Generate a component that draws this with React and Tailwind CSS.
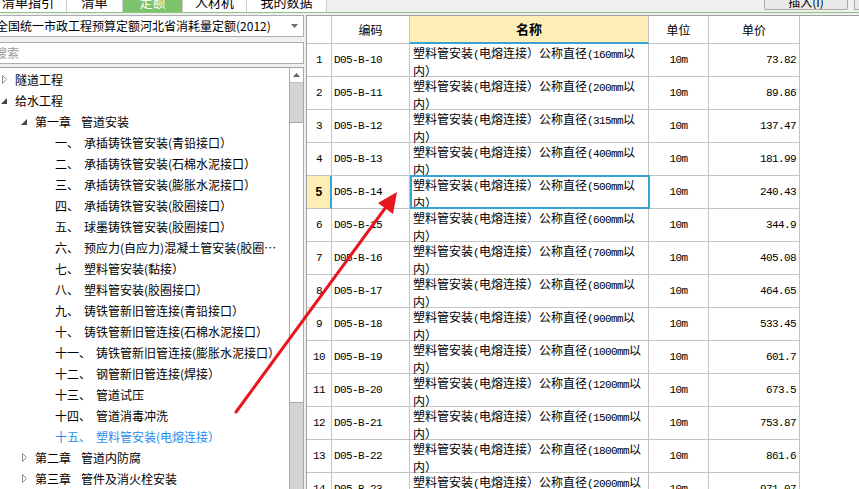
import React from 'react'

const mono = "font-['Liberation_Mono','Noto_Sans_CJK_SC',monospace] text-[11px] tracking-[-0.6px]"

const tabs = [
  { name: '清单指引', w: 'w-[67px]', align: 'pl-[2px]' },
  { name: '清单', w: 'w-[56px]', align: 'text-center' },
  { name: '定额', w: 'w-[60px]', align: 'text-center', active: true },
  { name: '人材机', w: 'w-[64px]', align: 'text-center' },
  { name: '我的数据', w: 'w-[80px]', align: 'text-center' },
]

const tree = [
  { lv: 0, icon: 'closed', text: '隧道工程' },
  { lv: 0, icon: 'open', text: '给水工程' },
  { lv: 1, icon: 'open', num: '第一章', text: '管道安装' },
  { lv: 2, num: '一、', text: '承插铸铁管安装(青铅接口）' },
  { lv: 2, num: '二、', text: '承插铸铁管安装(石棉水泥接口）' },
  { lv: 2, num: '三、', text: '承插铸铁管安装(膨胀水泥接口）' },
  { lv: 2, num: '四、', text: '承插铸铁管安装(胶圈接口）' },
  { lv: 2, num: '五、', text: '球墨铸铁管安装(胶圈接口）' },
  { lv: 2, num: '六、', text: '预应力(自应力)混凝土管安装(胶圈…' },
  { lv: 2, num: '七、', text: '塑料管安装(黏接）' },
  { lv: 2, num: '八、', text: '塑料管安装(胶圈接口）' },
  { lv: 2, num: '九、', text: '铸铁管新旧管连接(青铅接口）' },
  { lv: 2, num: '十、', text: '铸铁管新旧管连接(石棉水泥接口）' },
  { lv: 2, num: '十一、', text: '铸铁管新旧管连接(膨胀水泥接口）' },
  { lv: 2, num: '十二、', text: '钢管新旧管连接(焊接）' },
  { lv: 2, num: '十三、', text: '管道试压' },
  { lv: 2, num: '十四、', text: '管道消毒冲洗' },
  { lv: 2, num: '十五、', text: '塑料管安装(电熔连接）', active: true },
  { lv: 1, icon: 'closed', num: '第二章', text: '管道内防腐' },
  { lv: 1, icon: 'closed', num: '第三章', text: '管件及消火栓安装' },
]

const rows = [
  [1, 'D05-B-10', '160', '73.82'],
  [2, 'D05-B-11', '200', '89.86'],
  [3, 'D05-B-12', '315', '137.47'],
  [4, 'D05-B-13', '400', '181.99'],
  [5, 'D05-B-14', '500', '240.43'],
  [6, 'D05-B-15', '600', '344.9'],
  [7, 'D05-B-16', '700', '405.08'],
  [8, 'D05-B-17', '800', '464.65'],
  [9, 'D05-B-18', '900', '533.45'],
  [10, 'D05-B-19', '1000', '601.7'],
  [11, 'D05-B-20', '1200', '673.5'],
  [12, 'D05-B-21', '1500', '753.87'],
  [13, 'D05-B-22', '1800', '861.6'],
  [14, 'D05-B-23', '2000', '971.07'],
]

function Arrow({ icon }) {
  if (icon === 'open') {
    return (
      <svg width="7" height="6" viewBox="0 0 7 6" className="shrink-0">
        <path d="M6 0 L6 6 L0 6 Z" fill="#454545" />
      </svg>
    )
  }
  return (
    <svg width="7" height="9" viewBox="0 0 7 9" className="shrink-0">
      <path d="M1.5 0.5 L5.5 4.5 L1.5 8.5 Z" fill="white" stroke="#8c8c8c" />
    </svg>
  )
}

function TreeRow({ item }) {
  if (item.lv === 2) {
    return (
      <div className={`flex h-[21px] items-center gap-[5px] whitespace-nowrap pl-[55px] ${item.active ? 'text-[#1f8ef0]' : ''}`}>
        <span>{item.num}</span>
        <span>{item.text}</span>
      </div>
    )
  }
  if (item.lv === 1) {
    return (
      <div className="flex h-[21px] items-center whitespace-nowrap pl-[21px]">
        <Arrow icon={item.icon} />
        <span className="ml-[7px]">{item.num}</span>
        <span className="ml-[10px]">{item.text}</span>
      </div>
    )
  }
  return (
    <div className="flex h-[21px] items-center whitespace-nowrap pl-[1px]">
      <Arrow icon={item.icon} />
      <span className="ml-[7px]">{item.text}</span>
    </div>
  )
}

export default function App() {
  return (
    <div className="relative h-[489px] w-[859px] overflow-hidden bg-[#f0f0f0] font-['Noto_Sans_CJK_SC',sans-serif] text-[12px] text-black">
      {/* tab strip, mostly scrolled out of view */}
      <div className="flex h-[13px] border-b border-[#86c779]">
        <div className="flex h-[12px] bg-white">
          {tabs.map((t) => (
            <div
              key={t.name}
              className={`${t.w} ${t.align} h-full overflow-hidden border-r border-[#cdcdcd] ${t.active ? 'bg-[#7cc36b] text-white' : ''}`}
            >
              <div className="-mt-[5px] text-[13px] leading-[14px]">{t.name}</div>
            </div>
          ))}
        </div>
        <div className="ml-auto h-[10px] w-[84px] overflow-hidden rounded-b-[2px] border-x border-b border-[#acacac] bg-[#e9e9e9] text-center">
          <div className="-mt-[5px] leading-[14px]">插入(I)</div>
        </div>
        <div className="ml-[6px] h-[10px] w-[5px] border-b border-l border-[#acacac] bg-[#e9e9e9]" />
      </div>

      <div className="flex h-[476px]">
        {/* left panel */}
        <div className="flex w-[304px] flex-col pt-[2px]">
          <div className="-ml-[8px] flex h-[22px] w-[312px] items-center border border-[#abadb3] bg-white pl-[3px]">
            <span className="flex-1 whitespace-nowrap">全国统一市政工程预算定额河北省消耗量定额(2012)</span>
            <svg width="7" height="4" viewBox="0 0 7 4" className="mr-[5px]">
              <path d="M0 0 L7 0 L3.5 4 Z" fill="#6d6d6d" />
            </svg>
          </div>
          <div className="-ml-[8px] mt-[5px] flex h-[22px] w-[312px] items-center border border-[#abadb3] bg-white pl-[2px] text-[#9a9a9a]">
            搜索
          </div>
          <div className="mt-[3px] flex flex-1 overflow-hidden border-t border-[#9d9d9d] bg-white">
            <div className="flex-1 overflow-hidden pt-[1px]">
              {tree.map((item, i) => (
                <TreeRow key={i} item={item} />
              ))}
            </div>
            <div className="flex w-[15px] flex-col border-x border-[#a9a9a9] bg-[#d4d4d4]">
              <div className="flex h-[15px] items-center justify-center border-b border-[#c4c4c4] bg-white">
                <svg width="7" height="4" viewBox="0 0 7 4">
                  <path d="M3.5 0 L7 4 L0 4 Z" fill="#606060" />
                </svg>
              </div>
              <div className="h-[39px]" />
              <div className="h-[281px] border-y border-[#a9a9a9] bg-white" />
            </div>
          </div>
        </div>

        {/* grid */}
        <div className="ml-[2px] mt-[2px] flex-1 border-l border-t border-[#a0a0a0] bg-white">
          <div className="flex h-[28px]">
            <div className="w-[25px] border-b border-r border-[#c4c4c4]" />
            <div className="flex w-[78px] items-center justify-center border-b border-r border-[#c4c4c4]">编码</div>
            <div className="flex w-[239px] items-center justify-center border-b-2 border-r border-[#c4c4c4] border-b-[#3aa3d6] bg-[#ffeeb6] text-[13px] font-bold">名称</div>
            <div className="flex w-[60px] items-center justify-center border-b border-r border-[#c4c4c4]">单位</div>
            <div className="flex w-[91px] items-center justify-center border-b border-r border-[#c4c4c4]">单价</div>
          </div>
          {rows.map(([n, code, dia, price]) => {
            const sel = n === 5
            return (
              <div key={n} className="flex h-[33px]">
                <div
                  className={`flex w-[25px] items-center justify-center border-b border-[#c4c4c4] pt-[1px] ${mono} ${sel ? 'border-r-2 border-r-[#3aa3d6] bg-[#ffedb6] font-bold text-[12px]' : 'border-r'}`}
                >
                  {n}
                </div>
                <div className={`flex w-[78px] items-center border-b border-r border-[#c4c4c4] pl-[2px] pt-[1px] ${mono}`}>{code}</div>
                <div className="relative w-[239px] whitespace-nowrap border-b border-r border-[#c4c4c4] pl-[3px] pt-[1px] leading-[15px]">
                  <div>
                    塑料管安装<span className={mono}>(</span>电熔连接）公称直径<span className={mono}>({dia}mm</span>以
                  </div>
                  <div>内）</div>
                  {sel && <span className="absolute -bottom-px -right-[2px] -top-px left-0 border-2 border-[#3aa3d6]" />}
                </div>
                <div className={`flex w-[60px] items-center justify-center border-b border-r border-[#c4c4c4] pt-[1px] ${mono}`}>10m</div>
                <div className={`flex w-[91px] items-center justify-end border-b border-r border-[#c4c4c4] pr-[3px] pt-[1px] ${mono}`}>{price}</div>
              </div>
            )
          })}
        </div>
      </div>

      {/* red annotation arrow */}
      <svg className="pointer-events-none absolute left-0 top-0" width="859" height="489">
        <line x1="236" y1="412" x2="386" y2="207" stroke="#e8161e" strokeWidth="3" strokeLinecap="round" />
        <polygon points="397,192 378,203 393,214" fill="#e8161e" />
      </svg>
    </div>
  )
}
